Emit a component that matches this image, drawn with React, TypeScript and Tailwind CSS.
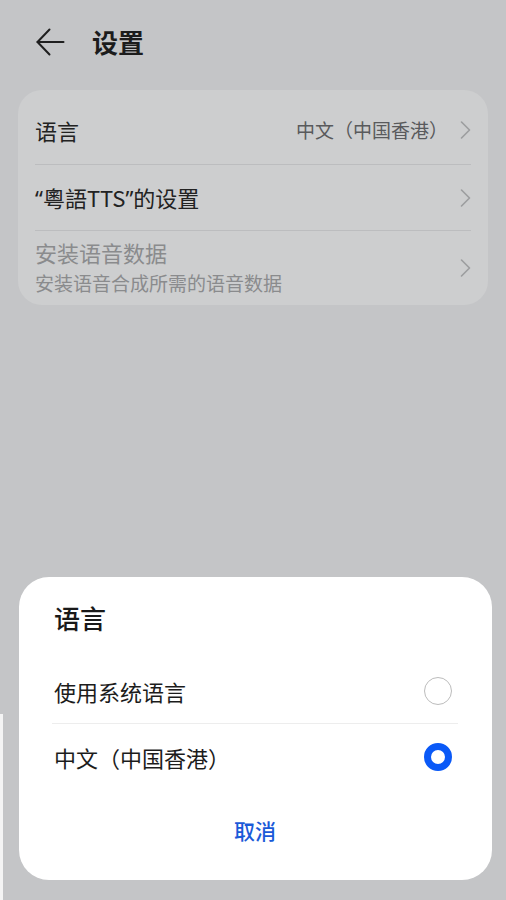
import React from "react";

const FONT = { fontFamily: '"Noto Sans CJK SC", "Noto Sans", sans-serif' };
const LATIN = { fontFamily: '"Noto Sans", sans-serif' };

function Chevron() {
  return (
    <svg width="11" height="18" viewBox="0 0 11 18" fill="none" className="shrink-0">
      <path d="M1.5 1 L9.5 9 L1.5 17" stroke="#9c9d9f" strokeWidth="1.6" strokeLinecap="round" strokeLinejoin="round" />
    </svg>
  );
}

function BackArrow() {
  return (
    <svg width="29" height="28" viewBox="0 0 29 28" fill="none">
      <path d="M13.5 1.5 L1.5 14 L13.5 26.5" stroke="#1f1f1f" strokeWidth="2" strokeLinecap="round" strokeLinejoin="round" />
      <path d="M1.5 14 H27.5" stroke="#1f1f1f" strokeWidth="2" strokeLinecap="round" />
    </svg>
  );
}

function Radio({ checked }: { checked: boolean }) {
  if (checked) {
    return <span className="w-[28px] h-[28px] rounded-full border-[7px] border-[#0a59f7] bg-white shrink-0" />;
  }
  return <span className="w-[28px] h-[28px] rounded-full border-[1.5px] border-[#bcbcbc] bg-white shrink-0" />;
}

export default function App() {
  return (
    <div className="relative w-[506px] h-[900px] overflow-hidden bg-[#c4c5c7] flex flex-col" style={FONT}>
      {/* ── Header ─────────────────────────────────────────── */}
      <div className="h-[84px] flex items-center pl-[36px]">
        <BackArrow />
        <h1 className="ml-[27px] text-[26px] font-bold text-[#1c1c1c] leading-none">设置</h1>
      </div>

      {/* ── Settings card ──────────────────────────────────── */}
      <div className="mx-[18px] mt-[6px] rounded-[24px] bg-[#cdcecf] px-[17px]">
        <div className="h-[75px] pt-[5px] flex items-center justify-between border-b border-[#bcbdbf]">
          <span className="text-[22px] text-[#222] leading-none">语言</span>
          <div className="flex items-center gap-[12px]">
            <span className="text-[19px] text-[#595a5c] leading-none">中文（中国香港）</span>
            <Chevron />
          </div>
        </div>
        <div className="h-[66px] flex items-center justify-between border-b border-[#bcbdbf]">
          <span className="text-[22px] text-[#222] leading-none">
            <span style={LATIN}>“</span>粵語TTS<span style={LATIN}>”</span>的设置
          </span>
          <Chevron />
        </div>
        <div className="h-[74px] flex items-center justify-between">
          <div className="flex flex-col -mt-[3px]">
            <span className="text-[22px] text-[#8a8b8d] leading-none">安装语音数据</span>
            <span className="mt-[10px] text-[19px] text-[#8a8b8d] leading-none">安装语音合成所需的语音数据</span>
          </div>
          <Chevron />
        </div>
      </div>

      {/* ── Language dialog ────────────────────────────────── */}
      <div className="mt-auto mb-[20px] ml-[19px] w-[473px] rounded-[30px] bg-white pl-[33px] pr-[34px]">
        <div className="h-[82px] flex items-center pl-[2px]">
          <span className="text-[26px] font-medium text-[#191919] leading-none">语言</span>
        </div>
        <div className="h-[65px] flex items-center justify-between pl-[2px] pr-[6px] border-b border-[#ededed]">
          <span className="text-[22px] text-[#1c1c1c] leading-none">使用系统语言</span>
          <Radio checked={false} />
        </div>
        <div className="h-[66px] flex items-center justify-between pl-[2px] pr-[6px]">
          <span className="text-[22px] text-[#1c1c1c] leading-none">中文（中国香港）</span>
          <Radio checked />
        </div>
        <div className="h-[90px] pb-[10px] flex items-center justify-center">
          <button className="text-[21px] font-medium text-[#1a5ad8] leading-none">取消</button>
        </div>
      </div>

      <div className="absolute left-0 top-[714px] w-[3px] h-[186px] bg-[#f4f4f4]" />
    </div>
  );
}
